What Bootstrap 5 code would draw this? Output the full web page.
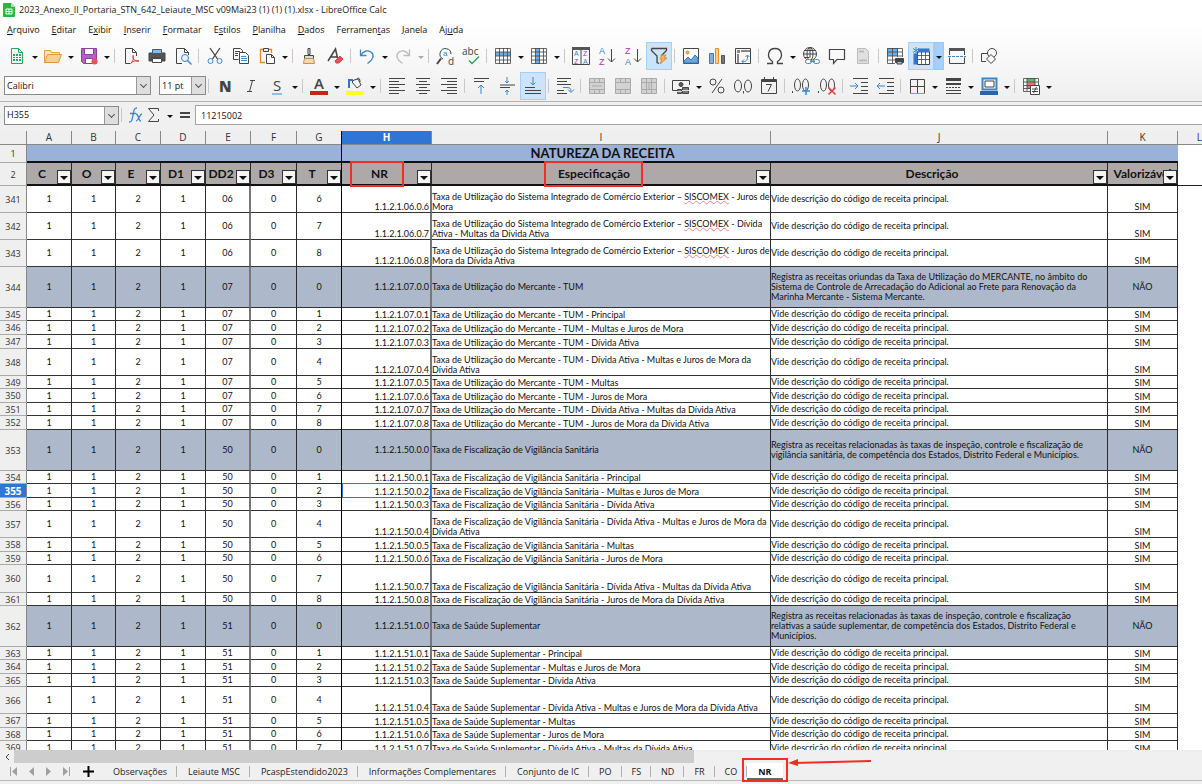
<!DOCTYPE html>
<html lang="pt-BR">
<head>
<meta charset="utf-8">
<meta name="viewport" content="width=device-width, initial-scale=1">
<title>2023_Anexo_II_Portaria_STN_642_Leiaute_MSC v09Mai23 (1) (1) (1).xlsx - LibreOffice Calc</title>
<link rel="stylesheet" href="https://cdn.jsdelivr.net/npm/bootstrap@5.3.0/dist/css/bootstrap.min.css">
<style>
  :root { --ui: "Open Sans", "Noto Sans", sans-serif; --cell: Lato, "Open Sans", sans-serif; --chrome: #f0f0f0; --sel: #2f75d6; --mark: #f22d22; }
  body { font: 9px/12px var(--ui); color: #1a1a1a; background: var(--chrome); }
  .app-top { background: linear-gradient(#fff 20px, #fdfdfd 36px, var(--chrome) 96px); border-bottom: 1px solid #b4b4b4; }
  .titlebar { height: 19px; padding-left: 3px; gap: 4px; }
  .menus { height: 22px; padding-left: 7px; gap: 12px; }
  .menus a { color: #111; text-decoration: none; }
  .menus u { text-underline-offset: 1px; }

  /* toolbars */
  .tools { height: 29px; padding-left: 4px; }
  .tools.fmt { height: 31px; }
  .tools button, .formula .cr { padding: 0; border: 1px solid transparent; background: none; color: #444; flex: none; }
  .tb { width: 26px; height: 28px; display: flex; align-items: center; justify-content: center; }
  .tb svg { width: 18px; height: 18px; fill: none; stroke: currentColor; stroke-width: 1; overflow: visible; }
  .cr { width: 10px; height: 28px; display: flex; align-items: center; justify-content: center; }
  .formula .cr { height: 18px; }
  .cr::after { content: ""; border: 3px solid transparent; border-top-color: #111; border-bottom: 0; margin-top: 3px; }
  .cr.off::after { border-top-color: #aaa; }
  .vsep { width: 4px; height: 14px; border: 0; border-left: 1px solid #c8c8c8; margin: 0 0 0 2px; flex: none; opacity: 1; }
  .tools .on { background: #cce3fa; border-color: #a6cff8; }
  .tools .on + .cr.hot { background: #a5d0fb; border-color: #9bc8f6; }
  .tools .off { color: #bbb; }
  .bl { stroke: #3a87cc; } .rd { stroke: #e03a3a; } .gn { stroke: #2ea160; } .pu { stroke: #a33ba8; } .or { stroke: #e8892b; }
  .tools svg text { stroke: none; fill: currentColor; font-family: var(--ui); }
  .tools svg .tbl, .tools svg .tpu { font-family: "Liberation Sans", sans-serif; }
  .tools svg .tbl { fill: #3a87cc; } .tools svg .tpu { fill: #a33ba8; }

  /* combo boxes */
  .combo { display: flex; height: 19px; border: 1px solid #8a8a8a; background: #fff; position: relative; flex: none; }
  .combo select, .combo input { border: 0; background: #fff; padding: 0 2px; width: 100%; min-width: 0; appearance: none; color: #111; outline: 0; font-size: 9px; }
  .combo .dd { width: 14px; flex: none; padding: 0; border: 0; border-left: 1px solid #999; background: #dedede; display: flex; align-items: center; justify-content: center; pointer-events: none; }
  .dd::after { content: ""; width: 5px; height: 5px; border: solid #555; border-width: 0 1px 1px 0; rotate: 45deg; margin-top: -2px; }
  .w-font { width: 147px; } .w-size { width: 47px; } .w-name { width: 115px; }
  .formula { padding: 3px 0 6px 4px; }
  .formula .line { border: 1px solid #a4a4a4; border-right: 0; height: 20px; padding: 0 5px; background: #fff; color: #111; outline: 0; min-width: 0; }
  .fbtn { border: 0; background: none; padding: 0; line-height: 18px; color: #444; text-align: center; }

  /* sheet */
  .sheet { background: #fff; overflow: hidden; position: relative; min-height: 0; }
  .grid { border-collapse: separate; border-spacing: 0; table-layout: fixed; width: 100%; min-width: 1100px; font: 9px/10px var(--cell); color: #111; }
  .grid th, .grid td { padding: 0; white-space: nowrap; height: inherit; }
  .grid tbody td { border-right: 1px solid #2b2b2b; border-bottom: 1px solid #333; text-align: center; vertical-align: middle; }
  .grid tbody td.g2 { border-right: 2px solid #777; }
  .grid tbody td.out { border-color: transparent; }
  .grid .letters th { height: 14px; background: #efefef; font: 10px/13px var(--ui); color: #333; text-align: center; border-right: 1px solid #888; border-bottom: 1px solid #888; }
  .grid .letters th:last-child { text-align: right; border-right: 0; }
  .grid .letters th.cur { background: var(--sel); color: #fff; font-weight: 700; }
  .grid .num { background: #efefef; font: 9px/10px var(--ui); color: #333; text-align: center; vertical-align: middle; border-right: 1px solid #888; border-bottom: 1px solid #aaa; padding-top: 1px; }
  .grid .num.cur { background: var(--sel); color: #fff; font-weight: 700; font-size: 10px; }
  .grid .r1 td.ttl { height: 18px; background: #9ab1d8; font-weight: 700; font-size: 13px; line-height: 14px; border-bottom: 2px solid #111; border-right: 0; }
  .grid .r2 th.fld { height: 23px; background: #aea9a8; border-right: 1px solid #2b2b2b; border-bottom: 2px solid #111; font-weight: 700; font-size: 12px; line-height: 14px; text-align: center; padding-right: 14px; position: relative; vertical-align: middle; }
  .grid .r2 th.fld.under { padding-right: 0; }
  .flt { position: absolute; right: 0; bottom: 0; width: 14px; height: 14px; padding: 0; border: 1px solid #333; background: #f4f4f4; display: flex; align-items: center; justify-content: center; }
  .flt::after { content: ""; border: 4px solid transparent; border-top-color: #111; border-bottom: 0; margin-top: 2px; }
  .callout-box { position: relative; }
  .callout-box::after { content: ""; position: absolute; inset: -5px -16px -6px -21px; border: 2px solid var(--mark); z-index: 3; pointer-events: none; }
  .callout-box.wide::after { left: -14px; right: -13px; }
  .grid td.nr { text-align: right; vertical-align: bottom; position: relative; padding-right: 1px; }
  .grid td.esp { text-align: left; vertical-align: bottom; }
  .grid td.des { text-align: left; }
  .grid td.val { vertical-align: bottom; }
  .grid .band td:not(.out) { background: #adb8ca; vertical-align: middle; }
  .pick::before { content: ""; position: absolute; inset: -1px -1px -1px 0; border: 1px solid var(--sel); z-index: 2; }
  .pick::after { content: ""; position: absolute; right: -2px; bottom: -2px; width: 3px; height: 3px; background: var(--sel); z-index: 2; }
  .sp { text-decoration: underline wavy #e88 1px; text-underline-offset: 0; text-decoration-skip-ink: none; }
  .freeze { position: absolute; top: 0; bottom: 0; left: 341px; width: 1px; background: #000; }

  /* bottom bars */
  .hscroll { height: 13px; background: var(--chrome); }
  .hscroll button { width: 14px; border: 0; background: none; padding: 0; line-height: 12px; }
  .hscroll .thumb { flex: 680; background: #cdcdcd; }
  .hscroll .rest { flex: 508; }
  .sheets { height: 18px; border-bottom: 1px solid #bbb; margin-bottom: 3px; padding-left: 6px; }
  .navb { width: 17px; border: 0; background: none; padding: 0; display: flex; justify-content: center; }
  .navb svg { width: 9px; height: 9px; fill: #a0a0a0; }
  .addb { width: 28px; border: 0; background: none; padding: 0; display: flex; justify-content: center; }
  .tabs a { color: #222; text-decoration: none; padding: 0 9px 0 11px; border-right: 1px solid #b0b0b0; line-height: 11px; }
  .tabs a.tight { padding: 0 9px 0 10px; }
  .tabs a.now { position: relative; align-self: stretch; background: #fff; border: 0; border-bottom: 2px solid #666; font-weight: 700; color: #111; padding: 3px 11px 0; }
  .now::after { content: ""; position: absolute; inset: -5px -5px -4px -5px; border: 2px solid var(--mark); }
  .now svg { position: absolute; left: 100%; top: -5px; margin-left: 5px; overflow: visible; }
</style>
</head>
<body>
<div class="d-flex flex-column vh-100 overflow-hidden">
  <header class="app-top flex-shrink-0">
    <div class="titlebar d-flex align-items-center">
      <svg width="12" height="14" viewBox="0 0 12 14"><path d="M1 0h7l4 4v9a1 1 0 0 1-1 1H1a1 1 0 0 1-1-1V1a1 1 0 0 1 1-1z" fill="#2fb344"/><path d="M8 0l4 4H8z" fill="#a6e3ae"/><path d="M3 6h6v5H3zM3 8.500h6M6 6v5" fill="none" stroke="#fff"/></svg>
      <span>2023_Anexo_II_Portaria_STN_642_Leiaute_MSC v09Mai23 (1) (1) (1).xlsx - LibreOffice Calc</span>
    </div>
    <nav class="menus d-flex align-items-center" aria-label="Menu">
      <a href="#"><u>A</u>rquivo</a><a href="#"><u>E</u>ditar</a><a href="#">E<u>x</u>ibir</a><a href="#"><u>I</u>nserir</a><a href="#"><u>F</u>ormatar</a><a href="#">E<u>s</u>tilos</a><a href="#"><u>P</u>lanilha</a><a href="#"><u>D</u>ados</a><a href="#">Ferramen<u>t</u>as</a><a href="#"><u>J</u>anela</a><a href="#">Aj<u>u</u>da</a>
    </nav>

    <div class="tools d-flex align-items-center" role="toolbar" aria-label="Padrão">
      <button class="tb" aria-label="Novo"><svg viewBox="0 0 18 18"><path class="gn" d="M3.500 1.500h7l4 4v11h-11zM10.500 1.500v4h4"/><path d="M5 7h8v7H5z" fill="#2ea160" stroke="none"/><path d="M5 9.500h8M5 11.500h8M7.500 7v7M10.500 7v7" stroke="#fff"/></svg></button><button class="cr" aria-label="Modelos"></button>
      <button class="tb" aria-label="Abrir"><svg viewBox="0 0 18 18"><path d="M.5 15.500v-12h6l1 2h8v2" stroke="#e0a14a" fill="#fbe3bd"/><path d="M3.500 7.500h14l-3 8H.5z" stroke="#e0993a" fill="#f8cf91"/></svg></button><button class="cr" aria-label="Recentes"></button>
      <button class="tb" aria-label="Salvar"><svg viewBox="0 0 18 18"><path d="M1.500 1.500h15v15h-13l-2-2z" fill="#b162c0" stroke="#8f3fa0"/><path d="M4.500 1.500h9v6h-9zM5.500 11.500h7v5h-7z" fill="#fff" stroke="#8f3fa0"/><circle cx="14.500" cy="14.500" r="3" fill="#e8505b" stroke="none"/></svg></button><button class="cr" aria-label="Salvar como"></button>
      <hr class="vsep">
      <button class="tb" aria-label="Exportar PDF"><svg viewBox="0 0 18 18"><path d="M8 16.500H3.500v-15h7l4 4V9M10.500 1.500v4h4"/><path class="rd" d="M11 8c1 4-1 8-3 9M11 9c0 4 3 6 6 5-3-1-6 0-8 2"/></svg></button>
      <button class="tb" aria-label="Imprimir"><svg viewBox="0 0 18 18"><path d="M1 6h16v8h-3v-3H4v3H1z" fill="#555" stroke="#444"/><path d="M4.500 2.500h9v4h-9z" fill="#8dbbe8" stroke="#555"/><path d="M4.500 11.500h9v4h-9z" fill="#fff"/></svg></button>
      <button class="tb" aria-label="Visualizar"><svg viewBox="0 0 18 18"><path d="M8 16.500H2.500v-15h8l4 4V8M10.500 1.500v4h4"/><circle class="bl" cx="11" cy="11" r="3.500" fill="#e5f1fb"/><path class="bl" d="M13.500 13.500l4 4" stroke-width="1.500"/></svg></button>
      <hr class="vsep">
      <button class="tb" aria-label="Cortar"><svg viewBox="0 0 18 18"><path d="M4 1l7.500 11M14 1L6.500 12" stroke-width="1.300"/><circle class="bl" cx="4.500" cy="14" r="2.500"/><circle class="bl" cx="13.500" cy="14" r="2.500"/></svg></button>
      <button class="tb" aria-label="Copiar"><svg viewBox="0 0 18 18"><path d="M6.500 12.500h-5v-11h7l2 2v2M3 4.500h5M3 6.500h3M3 8.500h3"/><path d="M7.500 5.500h6l3 3v8h-9z" fill="#fff"/><path class="bl" d="M9 9.500h5M9 11.500h6M9 13.500h6"/></svg></button>
      <button class="tb" aria-label="Colar"><svg viewBox="0 0 18 18"><path class="or" d="M7 15.500H2.500v-13h11V6" stroke-width="1.300"/><path d="M5.500 1.500h5v3h-5z" fill="#eee"/><path d="M8.500 7.500h5l3 3v6h-8zM13.500 7.500v3h3" fill="#fff"/></svg></button><button class="cr" aria-label="Colar especial"></button>
      <hr class="vsep">
      <button class="tb" aria-label="Clonar formatação"><svg viewBox="0 0 18 18"><path d="M8 1.500h2v6H8zM4.500 8.500h9v3h-9z" fill="#ddd"/><path class="or" d="M4.500 11.500l-1 5h11l-1-5" fill="#fbd9ac"/></svg></button>
      <button class="tb" aria-label="Limpar formatação"><svg viewBox="0 0 18 18"><path d="M2 14L9.500 2l2 9M5 10h6" stroke-width="1.500"/><path d="M9 14l5-5 3 3-4 4h-3z" fill="#e8505b" stroke="#d43f4a"/></svg></button>
      <hr class="vsep">
      <button class="tb" aria-label="Desfazer"><svg viewBox="0 0 18 18"><path class="bl" d="M2.500 2.500v6h6M2.500 8.500c3-5 8-6 11-3s2 7-4 11" stroke-width="1.300"/></svg></button><button class="cr" aria-label="Lista desfazer"></button>
      <button class="tb off" aria-label="Refazer"><svg viewBox="0 0 18 18"><path d="M15.500 2.500v6h-6M15.500 8.500c-3-5-8-6-11-3s-2 7 4 11" stroke-width="1.300"/></svg></button><button class="cr off" aria-label="Lista refazer"></button>
      <hr class="vsep">
      <button class="tb" aria-label="Localizar"><svg viewBox="0 0 18 18"><path d="M5 11.500L1 17" stroke-width="2"/><path d="M7 12A5.500 5.500 0 1 1 15 7"/><text class="tbl" x="7" y="9" font-size="8">a</text><text x="12" y="18" font-size="10">d</text></svg></button>
      <button class="tb" aria-label="Ortografia"><svg viewBox="0 0 18 18"><text x="0" y="8" font-size="10">abc</text><path class="gn" d="M7 13.500l3 3 7-7" stroke-width="1.500"/></svg></button>
      <hr class="vsep">
      <button class="tb" aria-label="Linha"><svg viewBox="0 0 18 18"><path d="M1 5h16v4H1z" fill="#6aaee8" stroke="none"/><path d="M1.500 1.500h15v15h-15zM1.500 5h15M1.500 9h15M1.500 13h15M5.500 1v16M9.500 1v16M13.500 1v16" stroke-width=".8"/></svg></button><button class="cr" aria-label="Opções de linha"></button>
      <button class="tb" aria-label="Coluna"><svg viewBox="0 0 18 18"><path d="M5.500 1h4v16h-4z" fill="#6aaee8" stroke="none"/><path d="M1.500 1.500h15v15h-15zM1.500 5h15M1.500 9h15M1.500 13h15M5.500 1v16M9.500 1v16M13.500 1v16" stroke-width=".8"/></svg></button><button class="cr" aria-label="Opções de coluna"></button>
      <hr class="vsep">
      <button class="tb" aria-label="Ordenar"><svg viewBox="0 0 18 18"><path d="M.5 .5h17v17H.5zM9 3v14"/><path d="M0 0h18v3H0z" fill="#555" stroke="none"/><text class="tbl" x="2" y="9" font-size="7">A</text><text class="tpu" x="2" y="17" font-size="7">Z</text><text class="tpu" x="11" y="9" font-size="7">Z</text><text class="tbl" x="11" y="17" font-size="7">A</text></svg></button>
      <button class="tb" aria-label="Ordem crescente"><svg viewBox="0 0 18 18"><text class="tbl" x="1" y="7" font-size="9">A</text><text class="tpu" x="1" y="18" font-size="9">Z</text><path d="M13.500 2v13M10 11.500l3.500 3.500 3.500-3.500"/></svg></button>
      <button class="tb" aria-label="Ordem decrescente"><svg viewBox="0 0 18 18"><text class="tpu" x="1" y="7" font-size="9">Z</text><text class="tbl" x="1" y="18" font-size="9">A</text><path d="M13.500 2v13M10 11.500l3.500 3.500 3.500-3.500"/></svg></button>
      <button class="tb on" aria-label="Autofiltro"><svg viewBox="0 0 18 18"><path d="M1.500 1.500h15v2L11 9M1.500 1.500v2L7 9v6.500l2 1" stroke-width="1.300"/><path d="M12 8h4l-2 3h3l-7 6 2-5h-2z" fill="#f6b367" stroke="#e8892b"/></svg></button>
      <hr class="vsep">
      <button class="tb" aria-label="Imagem"><svg viewBox="0 0 18 18"><path d="M1.500 1.500h15v15h-15z" fill="#fff"/><path d="M2 14l4-4 3 3 4-5 3 3v5H2z" fill="#6aa6dc" stroke="#3a7ab8"/><circle cx="5.500" cy="5.500" r="1.500" fill="#f3a64d" stroke="#e8892b"/></svg></button>
      <button class="tb" aria-label="Gráfico"><svg viewBox="0 0 18 18"><path d="M1.500 6.500h4v10h-4z" fill="#7fb1e0" stroke="#3a7ab8"/><path d="M7.500 1.500h3v15h-3z" fill="#fbd190" stroke="#e8892b"/><path d="M13.500 8.500h3v8h-3z" fill="#777" stroke="#555"/></svg></button>
      <button class="tb" aria-label="Tabela dinâmica"><svg viewBox="0 0 18 18"><path d="M1.500 1.500h15v15h-15z"/><path d="M3 3h3v3H3zM7 3h9v2H7zM3 7h2v9H3z" fill="#888" stroke="none"/><path class="bl" d="M8 14.500c4 1 6-2 5.500-6M10 12.500l-2 2 2 2M11.500 10l2-2 2 2" /></svg></button>
      <hr class="vsep">
      <button class="tb" aria-label="Caractere especial"><svg viewBox="0 0 18 18"><path d="M1 16.500h5.500v-2C0 10 2 1.500 9 1.500s9 8.500 2.500 13v2H17" stroke-width="1.300"/></svg></button><button class="cr" aria-label="Caracteres recentes"></button>
      <button class="tb" aria-label="Hiperlink"><svg viewBox="0 0 18 18"><circle cx="8" cy="7" r="6.500"/><ellipse cx="8" cy="7" rx="3" ry="6.500"/><path d="M1.500 7h13M2.500 3.500h11M2.500 10.500h5M8 .5v10"/><rect class="bl" x="3.500" y="12.500" width="6" height="4" rx="2" fill="#fff"/><rect class="bl" x="11.500" y="12.500" width="6" height="4" rx="2" fill="#fff"/><path class="bl" d="M8 14.500h5"/></svg></button>
      <button class="tb" aria-label="Anotação"><svg viewBox="0 0 18 18"><path d="M1.500 2.500h15v10H9l-3.500 4v-4h-4z" stroke-width="1.200"/></svg></button>
      <button class="tb off" aria-label="Cabeçalhos e rodapés"><svg viewBox="0 0 18 18"><path d="M3.500 1.500h8l3 3v12h-11z" fill="#e0e0e0"/><path d="M5 4.500h5M5 13.500h8" stroke-width="2"/></svg></button>
      <hr class="vsep">
      <button class="tb" aria-label="Área de impressão"><svg viewBox="0 0 18 18"><path d="M1 1h11v8H1z" fill="#6aaee8" stroke="none"/><path d="M9 16.500H1.500v-15h15V10M1.500 5h15M1.500 9h15M1.500 13h8M6.500 1v16M11.500 1v9" stroke-width=".8"/><path d="M9.500 11.500h8v4h-8z" fill="#444"/><path d="M11 14.500h5v2.500h-5z" fill="#9cc5ee"/></svg></button>
      <button class="tb on" aria-label="Congelar linhas e colunas"><svg viewBox="0 0 18 18"><path d="M5.500 4.500h12v13h-12z" fill="#fff"/><path d="M6 1.500h11.500v4H6zM1.500 6.500h4v11h-4z" fill="#2f75d6" stroke="none"/><path d="M5.500 8.500h12M5.500 12.500h12M9.500 5v12M13.500 5v12" stroke-width=".8"/><path class="bl" d="M4 0v7M1 1.500l6 4M7 1.500l-6 4"/></svg></button><button class="cr hot" aria-label="Opções de congelar"></button>
      <button class="tb" aria-label="Dividir janela"><svg viewBox="0 0 18 18"><path d="M1.500 8V1.500h15V8M1.500 10.500v6h15v-6"/><path d="M1 1h16v3H1z" fill="#555" stroke="none"/><path class="bl" d="M0 9.500h18" stroke-dasharray="3 1"/></svg></button>
      <hr class="vsep">
      <button class="tb" aria-label="Desenho"><svg viewBox="0 0 18 18"><circle cx="12" cy="6" r="4.500"/><path d="M6 14.500H1.500v-8h6"/><path d="M11 7.500l4.500 4.500-4.500 4.500L6.500 12z" fill="#f8f8f8"/></svg></button>
    </div>

    <div class="tools fmt d-flex align-items-center" role="toolbar" aria-label="Formatação">
      <div class="combo w-font"><select aria-label="Nome da fonte"><option>Calibri</option></select><span class="dd"></span></div>
      <div class="combo w-size ms-2"><select aria-label="Tamanho da fonte"><option>11 pt</option></select><span class="dd"></span></div>
      <hr class="vsep">
      <button class="tb" aria-label="Negrito"><svg viewBox="0 0 18 18"><text x="3" y="15" font-size="15" font-weight="800">N</text></svg></button>
      <button class="tb" aria-label="Itálico"><svg viewBox="0 0 18 18"><path d="M8 3.500h5M5 14.500h5M10.500 3.500l-3 11"/></svg></button>
      <button class="tb" aria-label="Sublinhado"><svg viewBox="0 0 18 18"><text x="5" y="14" font-size="15">S</text><path class="bl" d="M4 17h10"/></svg></button><button class="cr" aria-label="Estilos de sublinhado"></button>
      <hr class="vsep">
      <button class="tb" aria-label="Cor da fonte"><svg viewBox="0 0 18 18"><text x="4" y="12" font-size="15" font-weight="600">A</text><path d="M0 14h18v4H0z" fill="#c9211e" stroke="none"/></svg></button><button class="cr" aria-label="Escolher cor"></button>
      <button class="tb" aria-label="Cor de fundo"><svg viewBox="0 0 18 18"><path d="M6 5l5 6 4-3-3-6-4 1zM11 2c1-2 3-1 3 3"/><path d="M3 11V3h4" stroke="#2f75d6" stroke-width="2"/><path d="M0 14h18v4H0z" fill="#ffff1e" stroke="none"/></svg></button><button class="cr" aria-label="Escolher cor de fundo"></button>
      <hr class="vsep">
      <button class="tb" aria-label="Alinhar à esquerda"><svg viewBox="0 0 18 18"><path d="M1 1.500h16M1 4.500h10M1 7.500h16M1 10.500h10M1 13.500h16M1 16.500h10"/></svg></button>
      <button class="tb" aria-label="Centralizar"><svg viewBox="0 0 18 18"><path d="M2 1.500h14M5 4.500h8M2 7.500h14M5 10.500h8M2 13.500h14M5 16.500h8"/></svg></button>
      <button class="tb" aria-label="Alinhar à direita"><svg viewBox="0 0 18 18"><path d="M1 1.500h16M7 4.500h10M1 7.500h16M7 10.500h10M1 13.500h16M7 16.500h10"/></svg></button>
      <hr class="vsep">
      <button class="tb" aria-label="Alinhar em cima"><svg viewBox="0 0 18 18"><path d="M2 1.500h15M2 4.500h10"/><path class="bl" d="M9 17V8M6 11l3-3 3 3"/></svg></button>
      <button class="tb" aria-label="Centralizar verticalmente"><svg viewBox="0 0 18 18"><path d="M2 8h15M2 10.500h10"/><path class="bl" d="M9 0v6M7 4l2 2 2-2M9 18v-5M7 15l2-2 2 2"/></svg></button>
      <button class="tb on" aria-label="Alinhar embaixo"><svg viewBox="0 0 18 18"><path d="M1 10.500h10M1 13.500h16M1 16.500h16"/><path class="bl" d="M9 0v8M6.500 5.500L9 8l2.500-2.500"/></svg></button>
      <hr class="vsep">
      <button class="tb" aria-label="Quebra automática"><svg viewBox="0 0 18 18"><path d="M1 1.500h14M1 4.500h10M1 7.500h14M1 13.500h7M1 16.500h10"/><path class="bl" d="M7 10.500h4c3 0 4 1 4 4M12 12.500l3 3 3-3"/></svg></button>
      <hr class="vsep">
      <button class="tb" aria-label="Mesclar e centralizar"><svg viewBox="0 0 18 18"><path d="M1.500 1.500h15v15h-15zM1.500 5.500h15M1.500 12.500h15M6.500 2v4M11.500 2v4M6.500 13v3M11.500 13v3M4 9h10" fill="#d2d2d2" stroke="#aaa"/></svg></button>
      <button class="tb" aria-label="Mesclar células"><svg viewBox="0 0 18 18"><path d="M1.500 1.500h15v15h-15zM1.500 5.500h15M1.500 12.500h15M6.500 2v4M11.500 2v4M6.500 13v3M11.500 13v3" fill="#d2d2d2" stroke="#aaa"/></svg></button>
      <button class="tb" aria-label="Dividir células"><svg viewBox="0 0 18 18"><path d="M1.500 1.500h15v15h-15zM1.500 5.500h15M1.500 12.500h15M6.500 2v14M11.500 2v14M9 6v6" fill="#d2d2d2" stroke="#aaa"/></svg></button>
      <hr class="vsep">
      <button class="tb" aria-label="Moeda"><svg viewBox="0 0 18 18"><path d="M5 13.500H.5v-10h17V8"/><circle cx="9" cy="7.500" r="2" fill="#555"/><path d="M5.500 12.500h4v4h-4zM10.500 10.500h6v6h-6z" fill="#777" stroke="#444"/><path d="M10 13.500h7M5 14.500h5" stroke="#ddd"/></svg></button><button class="cr" aria-label="Outras moedas"></button>
      <button class="tb" aria-label="Porcentagem"><svg viewBox="0 0 18 18"><circle cx="5" cy="5" r="3"/><circle cx="13" cy="13" r="3"/><path d="M14 2L4 16"/></svg></button>
      <button class="tb" aria-label="Número"><svg viewBox="0 0 18 18"><ellipse cx="4" cy="9" rx="3.500" ry="6"/><ellipse cx="14" cy="9" rx="3.500" ry="6"/><path d="M9.500 14v2.500"/></svg></button>
      <button class="tb" aria-label="Data"><svg viewBox="0 0 18 18"><path d="M1.500 2.500h15v14h-15z"/><path d="M1 4h16" stroke-width="2"/><path d="M4.500 0v3M13.500 0v3M6 7.500h5.500L8 14.500"/></svg></button>
      <hr class="vsep">
      <button class="tb" aria-label="Adicionar casa decimal"><svg viewBox="0 0 18 18"><path d="M.5 14v2"/><ellipse cx="5.500" cy="8" rx="3" ry="6"/><ellipse cx="13.500" cy="8" rx="3" ry="6"/><path class="bl" d="M14 10v8M10 14h8" stroke-width="1.500"/></svg></button>
      <button class="tb" aria-label="Remover casa decimal"><svg viewBox="0 0 18 18"><path d="M.5 14v2"/><ellipse cx="5.500" cy="8" rx="3" ry="6"/><ellipse cx="13.500" cy="8" rx="3" ry="6"/><path class="rd" d="M10.500 10.500l7 7M17.500 10.500l-7 7" stroke-width="1.500"/></svg></button>
      <hr class="vsep">
      <button class="tb" aria-label="Aumentar recuo"><svg viewBox="0 0 18 18"><path d="M3 1.500h15M11 5.500h7M11 9.500h7M11 13.500h7M3 16.500h15"/><path class="bl" d="M0 9h8M5 6l3 3-3 3"/></svg></button>
      <button class="tb" aria-label="Diminuir recuo"><svg viewBox="0 0 18 18"><path d="M3 1.500h15M11 5.500h7M11 9.500h7M11 13.500h7M3 16.500h15"/><path class="bl" d="M9 9H1M4 6L1 9l3 3"/></svg></button>
      <hr class="vsep">
      <button class="tb" aria-label="Bordas"><svg viewBox="0 0 18 18"><path d="M2.500 16V2.500h14V16M9.500 2.500V16M2.500 9.500h14"/><path class="or" d="M2 16.500h15"/></svg></button><button class="cr" aria-label="Escolher bordas"></button>
      <button class="tb" aria-label="Estilo de borda"><svg viewBox="0 0 18 18"><path d="M2 2.500h15" stroke-width="3"/><path d="M2 7h15" stroke-width="2"/><path d="M2 10.500h15" stroke-dasharray="2 1"/><path d="M2 13.500h15M2 16.500h15"/></svg></button><button class="cr" aria-label="Escolher estilo"></button>
      <button class="tb" aria-label="Cor da borda"><svg viewBox="0 0 18 18"><path d="M2.500 1.500h14v11h-14z" class="bl" stroke-width="2"/><path d="M5 4h9v6H5z" fill="#fff"/><path d="M0 14h18v4H0z" fill="#2f5fa5" stroke="none"/></svg></button><button class="cr" aria-label="Escolher cor da borda"></button>
      <hr class="vsep">
      <button class="tb" aria-label="Formatação condicional"><svg viewBox="0 0 18 18"><path d="M5 1h8v4H5z" fill="#52b878" stroke="none"/><path d="M5 5h8v7H5z" fill="#f07070" stroke="none"/><path d="M8 14.500H1.500v-13h15V8M1.500 5h15M1.500 8.500h8M1.500 11.500h7M5 1v13M13 1v7" stroke-width=".8"/><path d="M8.500 8.500h9v9h-9z" fill="#fff"/><path d="M10 12h6M10 14.500h6M14.500 10l-3 6"/></svg></button><button class="cr" aria-label="Opções condicionais"></button>
    </div>
  </header>

  <div class="formula d-flex align-items-center flex-shrink-0">
    <div class="combo w-name"><input aria-label="Caixa de nome" value="H355"><button class="dd" aria-label="Nomes"></button></div>
    <hr class="vsep">
    <button class="fbtn" aria-label="Assistente de funções"><svg class="d-block" width="20" height="16" viewBox="0 0 20 16" fill="none" stroke="#3a87cc" stroke-width="1.300"><path d="M4 15c3 0 3-2 4-7s1-7 4-7M5 6.500h6M11 7c3 0 2 7 5 7M17 7c-2 0-4 7-6 7"/></svg></button>
    <button class="fbtn" aria-label="Soma"><svg class="d-block" width="16" height="16" viewBox="0 0 16 16" fill="none" stroke="#444"><path d="M13.500 4V1.500h-10L9 8l-5.500 6.500h10V12"/></svg></button>
    <button class="cr ms-1" aria-label="Outras funções"></button>
    <button class="fbtn px-1" aria-label="Fórmula"><svg class="d-block" width="12" height="8" viewBox="0 0 12 8" stroke="#444" stroke-width="2"><path d="M1 2h10M1 6h10"/></svg></button>
    <input class="line flex-grow-1" aria-label="Linha de entrada" value="11215002">
  </div>

  <main class="sheet flex-grow-1">
    <table class="grid">
      <colgroup id="cols"></colgroup>
      <thead id="head"></thead>
      <tbody id="rows"></tbody>
    </table>
    <div class="freeze"></div>
  </main>

  <div class="hscroll d-flex flex-shrink-0"><button aria-label="Rolar à esquerda"><svg class="d-block mx-auto" width="5" height="8" viewBox="0 0 5 8" fill="none" stroke="#444"><path d="M4 1L1 4l3 3"/></svg></button><div class="thumb"></div><div class="rest"></div></div>
  <footer class="sheets d-flex align-items-center flex-shrink-0">
    <button class="navb" aria-label="Primeira"><svg viewBox="0 0 9 9"><path d="M0 0h1v9H0zM7 0v9L2 4.500z"/></svg></button>
    <button class="navb" aria-label="Anterior"><svg viewBox="0 0 9 9"><path d="M7 0v9L2 4.500z"/></svg></button>
    <button class="navb" aria-label="Próxima"><svg viewBox="0 0 9 9"><path d="M2 0v9l5-4.500z"/></svg></button>
    <button class="navb" aria-label="Última"><svg viewBox="0 0 9 9"><path d="M8 0h1v9H8zM2 0v9l5-4.500z"/></svg></button>
    <button class="addb" aria-label="Inserir planilha"><svg width="11" height="11" viewBox="0 0 11 11" stroke="#000" stroke-width="2"><path d="M5.500 0v11M0 5.500h11"/></svg></button>
    <nav class="tabs d-flex align-items-center align-self-stretch" aria-label="Planilhas">
      <a href="#">Observações</a><a href="#">Leiaute MSC</a><a href="#">PcaspEstendido2023</a><a href="#">Informações Complementares</a><a href="#">Conjunto de IC</a><a href="#" class="tight">PO</a><a href="#" class="tight">FS</a><a href="#" class="tight">ND</a><a href="#" class="tight">FR</a><a href="#" class="tight">CO</a><a href="#" class="now">NR<svg width="84" height="8" viewBox="0 0 84 8" fill="none" stroke="#f22d22" stroke-width="2"><path d="M83 3L6 5"/><path d="M0 5l10-4v7z" fill="#f22d22" stroke="none"/></svg></a>
    </nav>
  </footer>
</div>

<script src="https://cdn.jsdelivr.net/npm/bootstrap@5.3.0/dist/js/bootstrap.bundle.min.js"></script>
<script>
  // null marks the column that absorbs extra window width
  const widths = [27, 45, 44, 45, 45, 45, 46, 45, 90, 339, null, 70, 24];
  document.getElementById('cols').innerHTML = widths.map(w => w ? `<col style="width:${w}px">` : '<col>').join('');

  const letters = 'ABCDEFGHIJKL'.split('');
  const flt = '<button class="flt" aria-label="Filtrar"></button>';
  const box = { NR: 'callout-box', 'Especificação': 'callout-box wide' };
  const fields = ['C', 'O', 'E', 'D1', 'DD2', 'D3', 'T', 'NR', 'Especificação', 'Descrição', 'Valorizável'];
  document.getElementById('head').innerHTML =
    '<tr class="letters"><th></th>' + letters.map(l => `<th${l === 'H' ? ' class="cur"' : ''}>${l}</th>`).join('') + '</tr>' +
    '<tr class="r1"><th class="num">1</th><td class="ttl text-center" colspan="11">NATUREZA DA RECEITA</td><td></td></tr>' +
    '<tr class="r2"><th class="num">2</th>' + fields.map(f => `<th class="fld${f === 'Valorizável' ? ' under' : ''}"><span class="${box[f] || ''}">${f}</span>${flt}</th>`).join('') + '<td class="out border-bottom border-dark"></td></tr>';

  const vide = 'Vide descrição do código de receita principal.';
  const sis = 'Taxa de Utilização do Sistema Integrado de Comércio Exterior – <span class="sp">SISCOMEX</span> - ';
  const tum = 'Taxa de Utilização do Mercante - TUM';
  const vig = 'Taxa de Fiscalização de Vigilância Sanitária';
  const sau = 'Taxa de Saúde Suplementar';
  // height, group code, T, specification, description (shaded rows only)
  const data = [
    [27, '06', 6, sis + 'Juros de<br>Mora'],
    [27, '06', 7, sis + 'Dívida<br>Ativa - Multas da Dívida Ativa'],
    [27, '06', 8, sis + 'Juros de<br>Mora da Dívida Ativa'],
    [41, '07', 0, tum, 'Registra as receitas oriundas da Taxa de Utilização do MERCANTE, no âmbito do<br>Sistema de Controle de Arrecadação do Adicional ao Frete para Renovação da<br>Marinha Mercante - Sistema Mercante.'],
    [13, '07', 1, tum + ' - Principal'],
    [14, '07', 2, tum + ' - Multas e Juros de Mora'],
    [14, '07', 3, tum + ' - Dívida Ativa'],
    [27, '07', 4, tum + ' - Dívida Ativa - Multas e Juros de Mora da<br>Dívida Ativa'],
    [13, '07', 5, tum + ' - Multas'],
    [14, '07', 6, tum + ' - Juros de Mora'],
    [13, '07', 7, tum + ' - Dívida Ativa - Multas da Dívida Ativa'],
    [14, '07', 8, tum + ' - Juros de Mora da Dívida Ativa'],
    [41, '50', 0, vig, 'Registra as receitas relacionadas às taxas de inspeção, controle e fiscalização de<br>vigilância sanitária, de competência dos Estados, Distrito Federal e Municípios.'],
    [13, '50', 1, vig + ' - Principal'],
    [14, '50', 2, vig + ' - Multas e Juros de Mora'],
    [13, '50', 3, vig + ' - Dívida Ativa'],
    [27, '50', 4, vig + ' - Dívida Ativa - Multas e Juros de Mora da<br>Dívida Ativa'],
    [14, '50', 5, vig + ' - Multas'],
    [13, '50', 6, vig + ' - Juros de Mora'],
    [28, '50', 7, vig + ' - Dívida Ativa - Multas da Dívida Ativa'],
    [13, '50', 8, vig + ' - Juros de Mora da Dívida Ativa'],
    [41, '51', 0, sau, 'Registra as receitas relacionadas às taxas de inspeção, controle e fiscalização<br>relativas a saúde suplementar, de competência dos Estados, Distrito Federal e<br>Municípios.'],
    [13, '51', 1, sau + ' - Principal'],
    [14, '51', 2, sau + ' - Multas e Juros de Mora'],
    [13, '51', 3, sau + ' - Dívida Ativa'],
    [27, '51', 4, sau + ' - Dívida Ativa - Multas e Juros de Mora da Dívida Ativa'],
    [14, '51', 5, sau + ' - Multas'],
    [13, '51', 6, sau + ' - Juros de Mora'],
    [14, '51', 7, sau + ' - Dívida Ativa - Multas da Dívida Ativa']
  ];
  document.getElementById('rows').innerHTML = data.map(([h, g, t, spec, desc], i) => {
    const n = 341 + i, cur = n === 355 ? ' cur' : '', pick = n === 355 ? ' pick' : '';
    return `<tr style="height:${h}px"${desc ? ' class="band"' : ''}><th class="num${cur}">${n}</th>` +
      `<td>1</td><td>1</td><td>2</td><td>1</td><td class="g2">${g}</td><td>0</td><td>${t}</td>` +
      `<td class="nr g2${pick}">1.1.2.1.${g}.0.${t}</td><td class="esp">${spec}</td><td class="des">${desc || vide}</td>` +
      `<td class="val">${desc ? 'NÃO' : 'SIM'}</td><td class="out"></td></tr>`;
  }).join('');
</script>
</body>
</html>
